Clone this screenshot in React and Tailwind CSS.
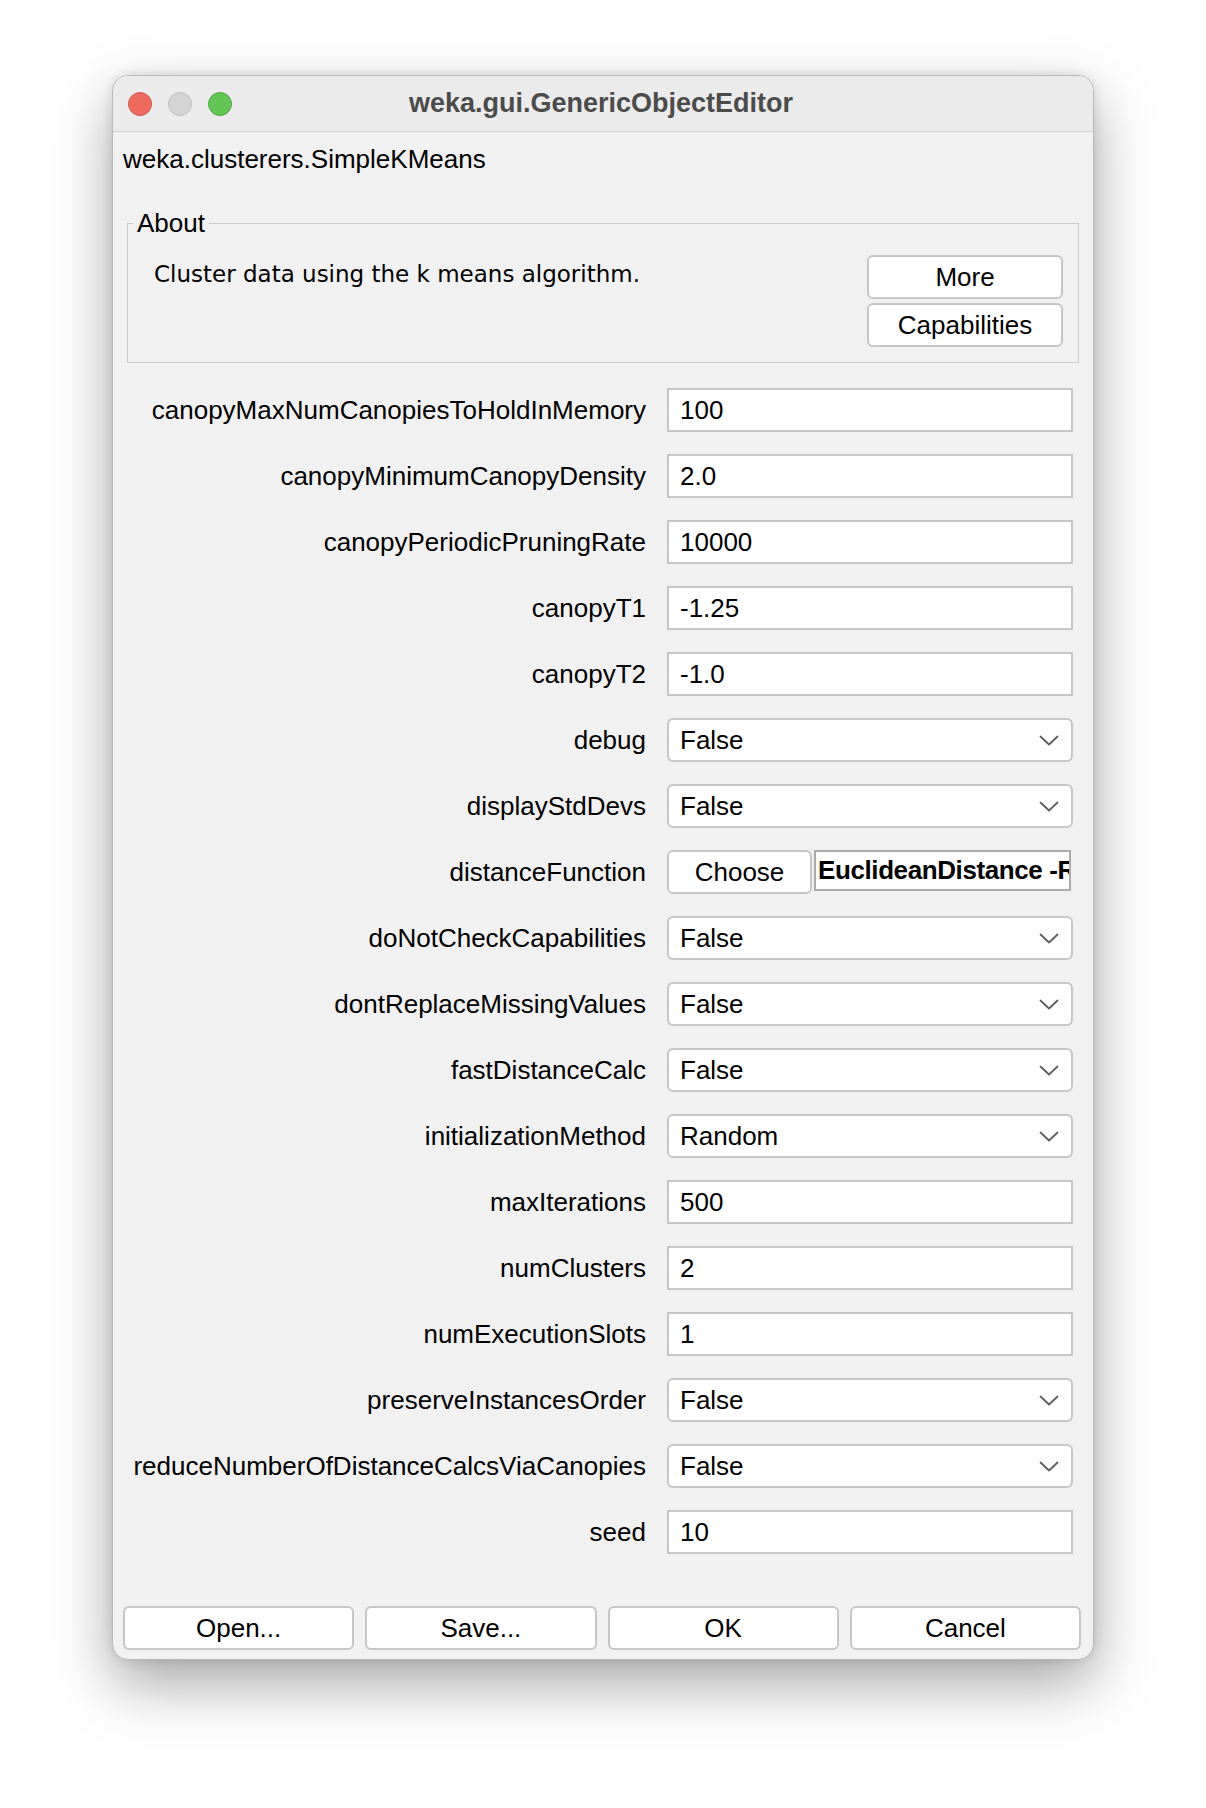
const rows = [
  { label: "canopyMaxNumCanopiesToHoldInMemory", kind: "text", value: "100" },
  { label: "canopyMinimumCanopyDensity", kind: "text", value: "2.0" },
  { label: "canopyPeriodicPruningRate", kind: "text", value: "10000" },
  { label: "canopyT1", kind: "text", value: "-1.25" },
  { label: "canopyT2", kind: "text", value: "-1.0" },
  { label: "debug", kind: "select", value: "False" },
  { label: "displayStdDevs", kind: "select", value: "False" },
  { label: "distanceFunction", kind: "object", value: "EuclideanDistance -R first-last" },
  { label: "doNotCheckCapabilities", kind: "select", value: "False" },
  { label: "dontReplaceMissingValues", kind: "select", value: "False" },
  { label: "fastDistanceCalc", kind: "select", value: "False" },
  { label: "initializationMethod", kind: "select", value: "Random" },
  { label: "maxIterations", kind: "text", value: "500" },
  { label: "numClusters", kind: "text", value: "2" },
  { label: "numExecutionSlots", kind: "text", value: "1" },
  { label: "preserveInstancesOrder", kind: "select", value: "False" },
  { label: "reduceNumberOfDistanceCalcsViaCanopies", kind: "select", value: "False" },
  { label: "seed", kind: "text", value: "10" },
]

const Chevron = () => (
  <svg width="20" height="11" viewBox="0 0 20 11" fill="none">
    <path d="M1.5 1.5 L10 9.5 L18.5 1.5" stroke="#5e5e5e" strokeWidth="1.8" strokeLinecap="round" strokeLinejoin="round" />
  </svg>
)

const Button = ({ children, className = "" }) => (
  <div className={`h-[44px] flex items-center justify-center bg-white border-2 border-[#c6c6c6] rounded-[6px] text-[26px] text-black ${className}`}>
    {children}
  </div>
)

const Field = ({ row }) => {
  if (row.kind === "text") {
    return (
      <div className="w-[406px] h-[44px] flex items-center bg-white border-2 border-[#c6c6c6] pl-[11px] text-[26px]">
        {row.value}
      </div>
    )
  }
  if (row.kind === "select") {
    return (
      <div className="w-[406px] h-[44px] flex items-center justify-between bg-white border-2 border-[#c6c6c6] rounded-[6px] pl-[11px] pr-[12px] text-[26px]">
        <span>{row.value}</span>
        <Chevron />
      </div>
    )
  }
  // object editor: Choose button + bold summary, clipped like the original
  return (
    <div className="w-[406px] h-[44px] flex items-start">
      <Button className="w-[145px] shrink-0">Choose</Button>
      <div className="ml-[2px] w-[257px] h-[41px] flex items-center overflow-hidden whitespace-nowrap bg-white border-2 border-[#ababab] pl-[2px] text-[26px] font-bold tracking-[-0.4px]">
        {row.value}
      </div>
    </div>
  )
}

const App = () => {
  return (
    <div className="w-[1206px] h-[1808px] bg-white pt-[75px] pl-[112px] font-['Liberation_Sans',Arial,sans-serif] text-black">
      <div className="w-[982px] bg-[#f1f1f1] border border-[#b9b9b9] rounded-[16px] overflow-hidden shadow-[0_24px_60px_rgba(0,0,0,0.35),0_0_12px_rgba(0,0,0,0.12)]">
        {/* title bar */}
        <div className="h-[56px] grid grid-cols-[1fr_auto_1fr] items-center bg-[#ebebeb] border-b border-[#d3d3d3]">
          <div className="flex items-center gap-[16px] pl-[15px]">
            <span className="w-[24px] h-[24px] rounded-full bg-[#ee6a5f] border border-[#d5544a]" />
            <span className="w-[24px] h-[24px] rounded-full bg-[#d4d4d4] border border-[#bdbdbd]" />
            <span className="w-[24px] h-[24px] rounded-full bg-[#61c454] border border-[#50a944]" />
          </div>
          <div className="text-[27px] font-bold text-[#4b4b4b] -ml-[4px]">weka.gui.GenericObjectEditor</div>
          <div />
        </div>

        <div className="h-[54px] flex items-center pl-[10px] text-[26px]">weka.clusterers.SimpleKMeans</div>

        <fieldset className="mx-[14px] mt-[22px] border border-[#cbcbcb]">
          <legend className="ml-[5px] px-[4px] text-[26px] leading-[30px]">About</legend>
          <div className="flex justify-between pt-[17px] pb-[15px] pl-[26px] pr-[15px]">
            <p className="mt-[5px] text-[23px] leading-[28px] font-['DejaVu_Sans',sans-serif]">
              Cluster data using the k means algorithm.
            </p>
            <div className="flex flex-col gap-[4px] w-[196px]">
              <Button className="h-[43px]">More</Button>
              <Button className="h-[43px]">Capabilities</Button>
            </div>
          </div>
        </fieldset>

        <div className="mt-[25px] flex flex-col gap-[22px] pl-[10px] pr-[20px]">
          {rows.map((row) => (
            <div key={row.label} className="flex items-center h-[44px]">
              <div className="flex-1 text-right text-[26px] whitespace-nowrap pr-[21px]">{row.label}</div>
              <Field row={row} />
            </div>
          ))}
        </div>

        <div className="mt-[52px] pb-[9px] pl-[10px] pr-[12px] grid grid-cols-4 gap-[11px]">
          <Button>Open...</Button>
          <Button>Save...</Button>
          <Button>OK</Button>
          <Button>Cancel</Button>
        </div>
      </div>
    </div>
  )
}

export default App
